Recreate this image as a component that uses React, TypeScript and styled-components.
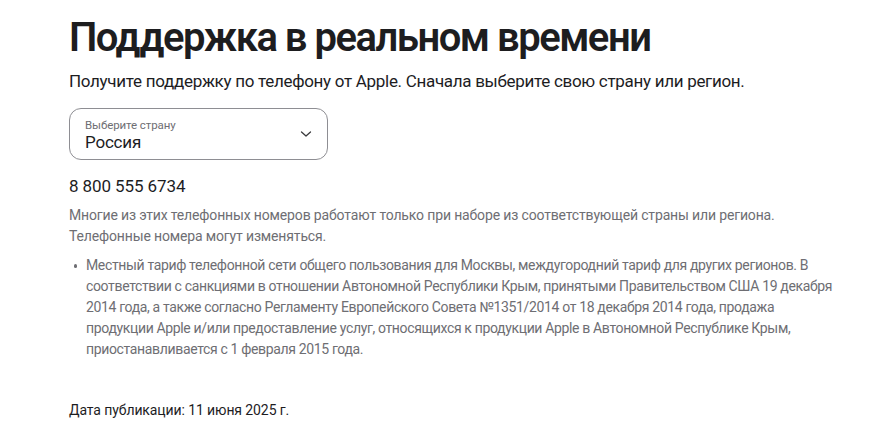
import React from "react";
import styled, { createGlobalStyle } from "styled-components";

const Global = createGlobalStyle`
  html, body { margin: 0; padding: 0; background: #fff; }
  body { font-family: Roboto, "Noto Sans", sans-serif; color: #1d1d1f; -webkit-font-smoothing: antialiased; }
`;

const Page = styled.main`
  padding: 14px 0 0 69px;
  width: 790px;
`;

const Title = styled.h1`
  margin: 0;
  font-size: 40px;
  line-height: 48px;
  font-weight: 600;
  letter-spacing: -1.5px;
  color: #1d1d1f;
`;

const Lead = styled.p`
  margin: 7px 0 0;
  font-size: 17px;
  line-height: 25px;
  letter-spacing: -0.3px;
`;

const Select = styled.div`
  margin-top: 14px;
  width: 259px;
  height: 52px;
  box-sizing: border-box;
  border: 1px solid #8e8e93;
  border-radius: 12px;
  display: flex;
  align-items: center;
  justify-content: space-between;
  padding: 0 15px 0 15px;
`;

const SelectText = styled.div`
  display: flex;
  flex-direction: column;
  padding-top: 2px;
`;

const SelectLabel = styled.span`
  font-size: 11.5px;
  line-height: 14px;
  color: #6e6e73;
  letter-spacing: -0.1px;
`;

const SelectValue = styled.span`
  font-size: 17px;
  line-height: 21px;
  letter-spacing: -0.2px;
`;

const Phone = styled.p`
  margin: 14px 0 0;
  font-size: 17px;
  line-height: 25px;
  letter-spacing: -0.1px;
`;

const Note = styled.p`
  margin: 6px 0 0;
  font-size: 14px;
  line-height: 21px;
  color: #6e6e73;
  letter-spacing: -0.15px;
`;

const List = styled.ul`
  margin: 8px 0 0;
  padding: 0 0 0 17px;
  list-style: none;
`;

const Item = styled.li`
  position: relative;
  font-size: 14px;
  line-height: 21px;
  color: #6e6e73;
  letter-spacing: -0.35px;
  &::before {
    content: "";
    position: absolute;
    left: -12.5px;
    top: 9px;
    width: 3.5px;
    height: 3.5px;
    border-radius: 50%;
    background: #6e6e73;
  }
`;

const Date = styled.p`
  margin: 40px 0 0;
  font-size: 14px;
  line-height: 21px;
  color: #1d1d1f;
  letter-spacing: -0.1px;
`;

const Chevron = () => (
  <svg width="12" height="8" viewBox="0 0 12 8" fill="none">
    <path d="M1.5 2 L6 6 L10.5 2" stroke="#3a3a3c" strokeWidth="1.3" strokeLinecap="round" strokeLinejoin="round" />
  </svg>
);

export default function App() {
  return (
    <>
      <Global />
      <Page>
        <Title>Поддержка в реальном времени</Title>
        <Lead>Получите поддержку по телефону от Apple. Сначала выберите свою страну или регион.</Lead>
        <Select>
          <SelectText>
            <SelectLabel>Выберите страну</SelectLabel>
            <SelectValue>Россия</SelectValue>
          </SelectText>
          <Chevron />
        </Select>
        <Phone>8 800 555 6734</Phone>
        <Note>
          Многие из этих телефонных номеров работают только при наборе из соответствующей страны или региона.
          <br />
          Телефонные номера могут изменяться.
        </Note>
        <List>
          <Item>
            Местный тариф телефонной сети общего пользования для Москвы, междугородний тариф для других регионов. В
            <br />
            соответствии с санкциями в отношении Автономной Республики Крым, принятыми Правительством США 19 декабря
            <br />
            2014 года, а также согласно Регламенту Европейского Совета №1351/2014 от 18 декабря 2014 года, продажа
            <br />
            продукции Apple и/или предоставление услуг, относящихся к продукции Apple в Автономной Республике Крым,
            <br />
            приостанавливается с 1 февраля 2015 года.
          </Item>
        </List>
        <Date>Дата публикации: 11 июня 2025 г.</Date>
      </Page>
    </>
  );
}
